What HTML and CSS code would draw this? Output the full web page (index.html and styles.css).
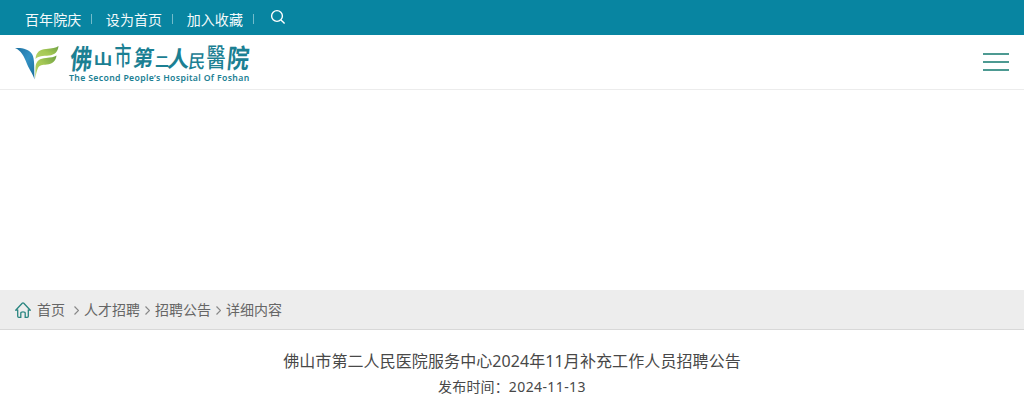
FILE: index.html
```
<!DOCTYPE html>
<html lang="zh-CN">
<head>
  <meta charset="UTF-8">
  <meta name="viewport" content="width=device-width, initial-scale=1.0">
  <title>佛山市第二人民医院</title>
  <link rel="stylesheet" href="styles.css">
</head>
<body>
  <div class="topbar">
    <a href="#">百年院庆</a>
    <a href="#">设为首页</a>
    <a href="#">加入收藏</a>
    <svg class="search" viewBox="0 0 16 16" width="16" height="16">
      <circle cx="7" cy="7" r="5.4"/>
      <path d="M11 11l3.6 3.6"/>
    </svg>
  </div>

  <header class="header">
    <a class="logo" href="#">
      <svg class="logo-mark" viewBox="0 0 44 36" width="44" height="36">
        <defs>
          <linearGradient id="blue" x1="0" y1="0" x2="1" y2="1">
            <stop offset="0" stop-color="#1c6f9f"/>
            <stop offset="0.5" stop-color="#3391c4"/>
            <stop offset="1" stop-color="#176c99"/>
          </linearGradient>
          <linearGradient id="green" x1="0" y1="1" x2="1" y2="0">
            <stop offset="0" stop-color="#b7d36a"/>
            <stop offset="0.5" stop-color="#a5c854"/>
            <stop offset="1" stop-color="#6da044"/>
          </linearGradient>
        </defs>
        <path fill="url(#blue)" d="M0 3C7 2.500 14 4 17 9C20 14 19 24 19.500 34.500C18 29 15 26 12 19C9 11 6 5.500 0 3z"/>
        <path fill="url(#green)" d="M20.500 14C21 7 25 4.500 31 4C37 3.500 41 3 43.500 1C43 6.500 40 10 34 10.500C28 11 23 11 20.500 14z"/>
        <path fill="url(#green)" d="M20.500 22C21 15.500 25 13.500 31 13C36 12.500 39 12 41.500 10.500C41 16 37 19 32 19.500C27 20 24.500 20 23 23C21.500 26 21 30 20.200 33.500z"/>
      </svg>
      <span class="logo-text">
        <span class="logo-cn">
          <span class="fo">佛</span><span class="shan">山</span><span class="shi">市</span><span class="di">第</span><span class="er">二</span><span class="ren">人</span><span class="min">民</span><span class="yi">醫</span><span class="yuan">院</span>
        </span>
        <span class="logo-en">The Second People’s Hospital Of Foshan</span>
      </span>
    </a>
    <button class="menu" aria-label="menu"><i></i><i></i><i></i></button>
  </header>

  <div class="banner"></div>

  <nav class="crumbs">
    <svg class="home" viewBox="0 0 16 16" width="16" height="16">
      <path d="M.7 8.200L7.200 1.300Q8 .5 8.800 1.300L15.300 8.200H13.300V14.200Q13.300 15.300 12.200 15.300H10.200V11Q10.200 9.800 8 9.800T5.800 11V15.300H3.800Q2.700 15.300 2.700 14.200V8.200z"/>
    </svg>
    <a class="first" href="#">首页</a>
    <svg class="arrow" viewBox="0 0 5 9" width="5" height="9"><path d="M.5.5l4 4-4 4"/></svg>
    <a href="#">人才招聘</a>
    <svg class="arrow" viewBox="0 0 5 9" width="5" height="9"><path d="M.5.5l4 4-4 4"/></svg>
    <a href="#">招聘公告</a>
    <svg class="arrow" viewBox="0 0 5 9" width="5" height="9"><path d="M.5.5l4 4-4 4"/></svg>
    <span>详细内容</span>
  </nav>

  <main class="article">
    <h1>佛山市第二人民医院服务中心2024年11月补充工作人员招聘公告</h1>
    <p>发布时间：<span class="date">2024-11-13</span></p>
  </main>
</body>
</html>
```
FILE: styles.css
```
* {
  box-sizing: border-box;
}

body {
  margin: 0;
  font-family: "Noto Sans", "Noto Sans CJK SC", sans-serif;
  font-size: 14px;
  font-weight: 400;
  color: #484848;
  background: #fff;
}

a {
  color: inherit;
  text-decoration: none;
}

.topbar {
  display: flex;
  align-items: center;
  height: 35px;
  padding-left: 25px;
  color: #f4fafb;
  background: #0885a1;
}

.topbar a {
  display: flex;
  align-items: center;
  margin-right: 13.500px;
  padding-top: 4px;
  line-height: 20px;
  letter-spacing: 0.08px;
}

.topbar a::after {
  content: "";
  width: 1px;
  height: 10px;
  margin: -2px 0 0 10px;
  background: #72bccb;
}

.search {
  margin: 0 0 1px 3px;
  fill: none;
  stroke: #fff;
  stroke-width: 1.4;
}

.header {
  display: flex;
  justify-content: space-between;
  height: 55px;
  padding: 0 15px;
  border-bottom: 1px solid #ececec;
}

.logo {
  display: flex;
  color: #1b8093;
}

.logo-mark {
  margin: 10px 11px 0 0;
}

.logo-text {
  display: flex;
  flex-direction: column;
  padding-top: 5px;
}

/* every character of the name has its own size, as in brush lettering */
.logo-cn {
  display: flex;
  align-items: center;
  width: 181px;
  height: 32px;
  font-family: "Noto Sans CJK TC", sans-serif;
  font-size: 20px;
  font-weight: 700;
  line-height: 30px;
}

.logo-cn span {
  flex: none;
  text-align: center;
}

.logo-cn .fo {
  width: 23px;
  font-size: 22px;
  transform: skewX(-6deg) scaleY(1.25);
}

.logo-cn .shan {
  width: 20px;
  padding-top: 8px;
  font-size: 19px;
  transform: scaleY(0.7);
}

.logo-cn .shi {
  width: 20px;
  padding-bottom: 2px;
  font-size: 17px;
  font-weight: 500;
  transform: scaleY(1.5);
}

.logo-cn .di {
  width: 22px;
  padding-top: 2px;
  transform: skewX(-8deg) scaleY(1.1);
}

.logo-cn .er {
  width: 13px;
  padding-top: 7px;
  font-size: 14px;
}

.logo-cn .ren {
  width: 21px;
  padding-top: 2px;
  font-size: 22px;
  transform: skewX(-6deg);
}

.logo-cn .min {
  width: 17px;
  padding-top: 7px;
  font-size: 17px;
  font-weight: 500;
  transform: skewX(-6deg) scaleY(1.1);
}

.logo-cn .yi {
  width: 20px;
  font-size: 19px;
  font-weight: 500;
  transform: scaleY(1.35);
}

.logo-cn .yuan {
  width: 25px;
  font-size: 22px;
  transform: skewX(-6deg) scaleY(1.2);
}

.logo-en {
  margin-left: -1px;
  font-size: 8.700px;
  font-weight: 600;
  line-height: 13px;
  letter-spacing: 0.34px;
  white-space: nowrap;
}

.menu {
  display: flex;
  flex-direction: column;
  gap: 6px;
  width: 26px;
  margin-top: 18px;
  padding: 0;
  border: 0;
  background: none;
}

.menu i {
  width: 26px;
  height: 2px;
  background: #4d9a92;
}

.banner {
  height: 200px;
}

.crumbs {
  display: flex;
  align-items: center;
  height: 40px;
  padding-left: 15px;
  color: #666;
  background: #ededed;
  border-bottom: 1px solid #d8d8d8;
}

.crumbs a,
.crumbs span {
  padding-bottom: 1px;
}

.home {
  margin-right: 6px;
  fill: none;
  stroke: #2a8580;
  stroke-width: 1.3;
}

.arrow {
  margin: 2px 5px 0;
  fill: none;
  stroke: #888;
  stroke-width: 1.2;
}

.first {
  margin-right: 4px;
}

.article {
  padding-top: 18px;
  text-align: center;
}

.article h1 {
  margin: 0;
  font-size: 16px;
  font-weight: 400;
  line-height: 26px;
  letter-spacing: 0.09px;
}

.article p {
  margin: 0;
  line-height: 25px;
  letter-spacing: 0.15px;
}

.date {
  letter-spacing: 0.4px;
}
```
